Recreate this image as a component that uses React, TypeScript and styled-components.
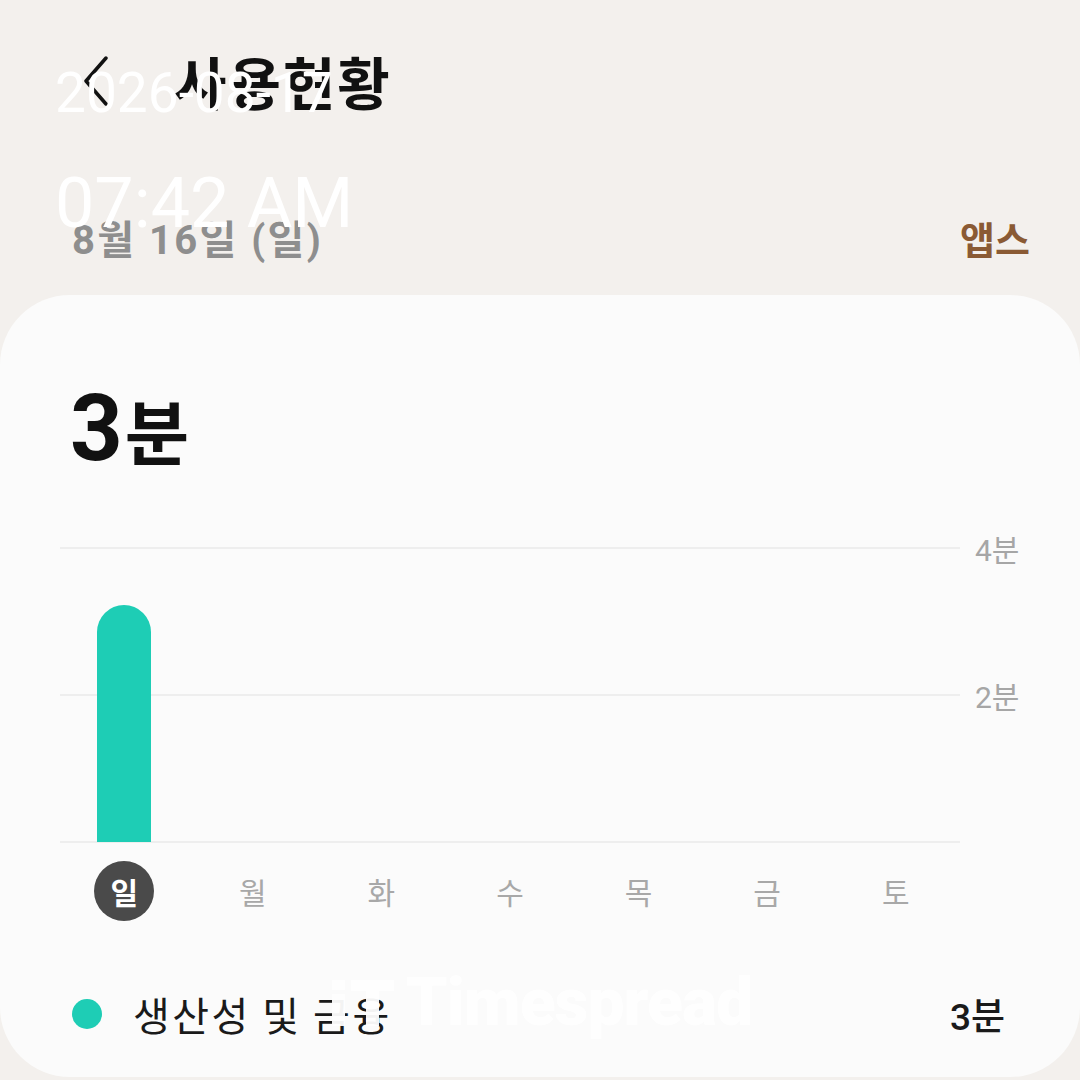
import styled, { createGlobalStyle } from "styled-components";

const GlobalStyle = createGlobalStyle`
  html, body {
    margin: 0;
    padding: 0;
    background: #f3f0ed;
  }
  body {
    font-family: Roboto, "Noto Sans CJK KR", sans-serif;
  }
`;

const days = ["일", "월", "화", "수", "목", "금", "토"];
const usage = [3.2, 0, 0, 0, 0, 0, 0]; // minutes per day
const maxMinutes = 4;
const plotHeight = 296;

const App = () => {
  return (
    <>
      <GlobalStyle />
      <Screen>
        <Header>
          <BackButton aria-label="back">
            <svg width="34" height="52" viewBox="0 0 34 52" fill="none">
              <path d="M26 4 L6 27 L26 50" stroke="#111" strokeWidth="3.5" strokeLinecap="round" strokeLinejoin="round" />
            </svg>
          </BackButton>
          <Title>사용현황</Title>
        </Header>

        <SubHeader>
          <DateLabel>8월 16일 (일)</DateLabel>
          <AppsLink>앱스</AppsLink>
        </SubHeader>

        <Card>
          <Total>
            3<Unit>분</Unit>
          </Total>

          <Chart>
            <Plot>
              <GridRow>
                <GridLine />
                <AxisLabel>4분</AxisLabel>
              </GridRow>
              <GridRow>
                <GridLine />
                <AxisLabel>2분</AxisLabel>
              </GridRow>
              <GridRow>
                <GridLine />
                <AxisLabel />
              </GridRow>
              <BarLayer>
                {usage.map((m, i) => (
                  <BarSlot key={i}>
                    {m > 0 && <Bar style={{ height: (m / maxMinutes) * plotHeight }} />}
                  </BarSlot>
                ))}
              </BarLayer>
            </Plot>
            <DayRow>
              {days.map((d, i) => (
                <DaySlot key={d}>
                  <Day $active={i === 0}>{d}</Day>
                </DaySlot>
              ))}
            </DayRow>
          </Chart>

          <Legend>
            <LegendDot />
            <LegendName>생산성 및 금융</LegendName>
            <LegendValue>3분</LegendValue>
          </Legend>
        </Card>

        <Stamp>
          <StampDate>2026-08-17</StampDate>
          <StampTime>07:42 AM</StampTime>
        </Stamp>

        <Watermark>
          <svg width="66" height="50" viewBox="0 0 66 50">
            <rect x="2" y="2" width="13" height="10" fill="#fff" />
            <rect x="2" y="16" width="13" height="32" fill="#fff" />
            <rect x="21" y="2" width="43" height="11" fill="#fff" />
            <rect x="36" y="13" width="13" height="35" fill="#fff" />
          </svg>
          <WatermarkText>Timespread</WatermarkText>
        </Watermark>
      </Screen>
    </>
  );
};

const Screen = styled.div`
  position: relative;
  width: 1080px;
  height: 1080px;
  overflow: hidden;
  background: #f3f0ed;
  display: flex;
  flex-direction: column;
`;

const Header = styled.div`
  display: flex;
  align-items: center;
  height: 80px;
  padding: 40px 0 0 80px;
  gap: 58px;
`;

const BackButton = styled.div`
  display: flex;
  align-items: center;
  width: 36px;
`;

const Title = styled.h1`
  margin: 0;
  font-family: "Noto Sans CJK KR", sans-serif;
  font-weight: 700;
  font-size: 57px;
  color: #111;
  letter-spacing: 2px;
`;

const SubHeader = styled.div`
  display: flex;
  justify-content: space-between;
  align-items: center;
  padding: 92px 50px 0 72px;
  height: 50px;
`;

const DateLabel = styled.div`
  font-family: Roboto, "Noto Sans CJK KR", sans-serif;
  font-weight: 700;
  font-size: 40px;
  letter-spacing: 2.4px;
  color: #8e8e8e;
`;

const AppsLink = styled.div`
  font-family: "Noto Sans CJK KR", sans-serif;
  font-weight: 700;
  font-size: 38px;
  color: #8a5a34;
`;

const Card = styled.div`
  margin-top: 33px;
  flex: 1;
  background: #fbfbfb;
  border-radius: 70px;
  margin-bottom: 3px;
  display: flex;
  flex-direction: column;
  padding: 88px 0 0 60px;
`;

const Total = styled.div`
  margin-left: 10px;
  font-family: Roboto, "Noto Sans CJK KR", sans-serif;
  font-weight: 700;
  font-size: 92px;
  line-height: 1;
  color: #111;
  display: flex;
  align-items: baseline;
`;

const Unit = styled.span`
  font-family: "Noto Sans CJK KR", sans-serif;
  font-size: 70px;
  margin-left: 2px;
`;

const Chart = styled.div`
  margin-top: 72px;
  display: flex;
  flex-direction: column;
  width: 1000px;
`;

const Plot = styled.div`
  position: relative;
  height: ${plotHeight}px;
  display: flex;
  flex-direction: column;
  justify-content: space-between;
`;

const GridRow = styled.div`
  display: flex;
  align-items: center;
  height: 2px;
`;

const GridLine = styled.div`
  width: 900px;
  height: 2px;
  background: #eeeeee;
`;

const AxisLabel = styled.div`
  margin-left: 15px;
  font-family: Roboto, "Noto Sans CJK KR", sans-serif;
  font-size: 30px;
  color: #a6a6a6;
`;

const BarLayer = styled.div`
  position: absolute;
  left: 0;
  bottom: 1px;
  width: 900px;
  height: 100%;
  display: grid;
  grid-template-columns: repeat(7, 1fr);
  align-items: end;
`;

const BarSlot = styled.div`
  display: flex;
  justify-content: center;
  height: 100%;
  align-items: flex-end;
`;

const Bar = styled.div`
  width: 54px;
  background: #1ecdb5;
  border-radius: 27px 27px 0 0;
`;

const DayRow = styled.div`
  width: 900px;
  display: grid;
  grid-template-columns: repeat(7, 1fr);
  margin-top: 18px;
`;

const DaySlot = styled.div`
  display: flex;
  justify-content: center;
`;

const Day = styled.div<{ $active?: boolean }>`
  width: 60px;
  height: 60px;
  border-radius: 50%;
  display: flex;
  align-items: center;
  justify-content: center;
  font-family: "Noto Sans CJK KR", sans-serif;
  font-size: 30px;
  font-weight: ${(p) => (p.$active ? 700 : 400)};
  color: ${(p) => (p.$active ? "#ffffff" : "#a8a8a8")};
  background: ${(p) => (p.$active ? "#4a4a4a" : "transparent")};
`;

const Legend = styled.div`
  display: flex;
  align-items: center;
  margin-top: 64px;
  padding: 0 75px 0 12px;
`;

const LegendDot = styled.div`
  width: 30px;
  height: 30px;
  border-radius: 50%;
  background: #1ecdb5;
`;

const LegendName = styled.div`
  margin-left: 31px;
  flex: 1;
  font-family: "Noto Sans CJK KR", sans-serif;
  font-size: 40px;
  letter-spacing: 2.5px;
  color: #1a1a1a;
`;

const LegendValue = styled.div`
  font-family: Roboto, "Noto Sans CJK KR", sans-serif;
  font-size: 37px;
  font-weight: 500;
  color: #1a1a1a;
`;

const Stamp = styled.div`
  position: absolute;
  left: 55px;
  top: 66px;
  display: flex;
  flex-direction: column;
  color: #ffffff;
  font-family: Roboto, sans-serif;
  line-height: 1;
`;

const StampDate = styled.div`
  font-size: 55px;
`;

const StampTime = styled.div`
  margin-top: 47px;
  font-size: 70px;
`;

const Watermark = styled.div`
  position: absolute;
  left: 330px;
  top: 964px;
  display: flex;
  align-items: center;
  gap: 10px;
  opacity: 0.95;
`;

const WatermarkText = styled.div`
  font-family: Roboto, sans-serif;
  font-weight: 900;
  font-size: 66px;
  color: #ffffff;
  letter-spacing: -1px;
`;

export default App;
